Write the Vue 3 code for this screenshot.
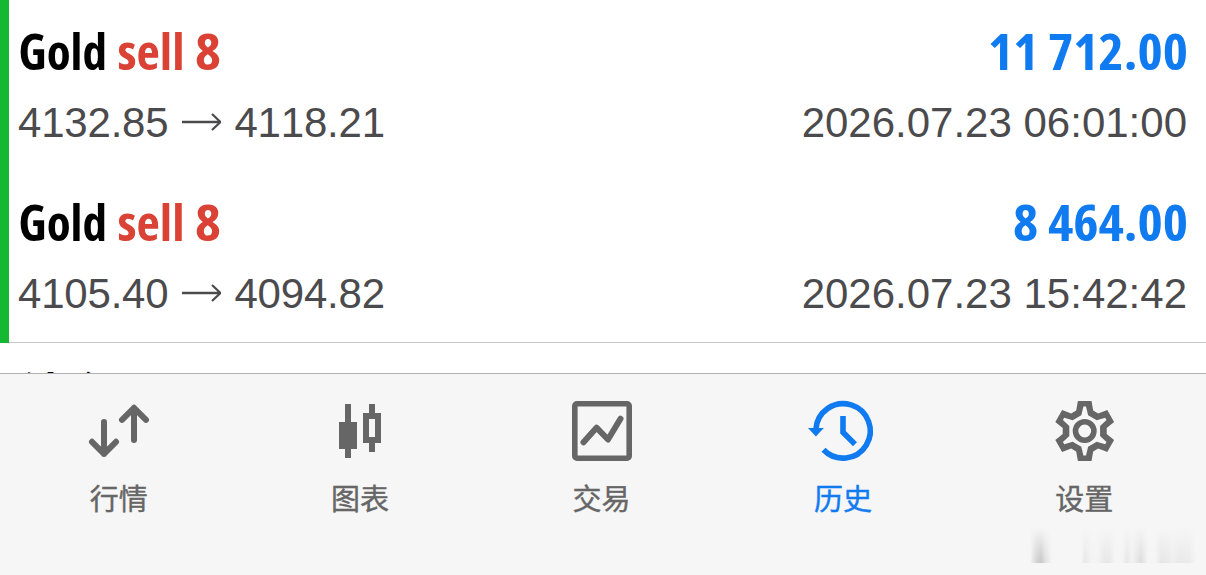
<script setup>
import {ref} from 'vue'

const deals = ref([
    {symbol: "Gold", side: "sell", volume: 8, open: "4132.85", close: "4118.21", profit: "11 712.00", profitWidth: 200, time: "2026.07.23 06:01:00"},
    {symbol: "Gold", side: "sell", volume: 8, open: "4105.40", close: "4094.82", profit: "8 464.00", profitWidth: 175, time: "2026.07.23 15:42:42"},
])

const tabs = [
    {id: "quotes", label: "行情"},
    {id: "charts", label: "图表"},
    {id: "trade", label: "交易"},
    {id: "history", label: "历史"},
    {id: "settings", label: "设置"},
]
const active = ref("history")

// repeat one tooth six times round the centre of the icon
const ring = tooth => {
    const pts = [0, 1, 2, 3, 4, 5].flatMap(i => {
        const a = i * Math.PI / 3
        return tooth.map(([x, y]) => [
            (33.7 + x * Math.cos(a) - y * Math.sin(a)).toFixed(2),
            (33 + x * Math.sin(a) + y * Math.cos(a)).toFixed(2)
        ].join(" "))
    })
    return `M${pts.join("L")}Z`
}
const gear = ring([[-8.5, -20.5], [-6.8, -30], [6.8, -30], [8.5, -20.5]])
    + ring([[-3.4, -15.8], [-1.3, -24.4], [1.3, -24.4], [3.4, -15.8]])
</script>

<template>
    <div class="screen">
        <main>
            <section class="group">
                <article v-for="deal in deals" :key="deal.time" class="deal">
                    <div class="line title">
                        <svg width="210" height="60">
                            <text x="-.5" y="48" textLength="88.5" lengthAdjust="spacingAndGlyphs">{{ deal.symbol }}</text>
                            <text class="sell" x="98.5" y="48" textLength="67" lengthAdjust="spacingAndGlyphs">{{ deal.side }}</text>
                            <text class="sell" x="176" y="48" textLength="26" lengthAdjust="spacingAndGlyphs">{{ deal.volume }}</text>
                        </svg>
                        <svg width="250" height="60">
                            <text class="profit" :x="251 - deal.profitWidth" y="48" :textLength="deal.profitWidth" lengthAdjust="spacingAndGlyphs">{{ deal.profit }}</text>
                        </svg>
                    </div>
                    <div class="line detail">
                        <span class="prices">
                            {{ deal.open }}
                            <svg width="40" height="20" viewBox="0 0 40 20">
                                <path d="M1 9H39M31 1L39.5 9L31 17" />
                            </svg>
                            {{ deal.close }}
                        </span>
                        <span>{{ deal.time }}</span>
                    </div>
                </article>
            </section>
            <div class="balance">结余</div>
        </main>

        <nav>
            <a v-for="tab in tabs" :key="tab.id" :class="{active: tab.id === active}" @click="active = tab.id">
                <svg class="icon" width="66" height="66" viewBox="0 0 66 66">
                    <g v-if="tab.id === 'quotes'" class="stroke round">
                        <path d="M18 24V56M6 43.8L18 55.8L30 43.8" />
                        <path d="M48 42V10M36 21.8L48 9.8L60 21.8" />
                    </g>
                    <g v-else-if="tab.id === 'charts'" class="fill">
                        <path d="M18 6H24V24H30V51H24V60H18V51H12V24H18Z" />
                        <path d="M42 6H48V15H54V45H48V54H42V45H36V15H42ZM42 21V39H48V21Z" />
                    </g>
                    <g v-else-if="tab.id === 'trade'">
                        <path class="fill" d="M9 3H59A5 5 0 0 1 64 8V58A5 5 0 0 1 59 63H9A5 5 0 0 1 4 58V8A5 5 0 0 1 9 3ZM9.6 8.6V57.4H58.4V8.6Z" />
                        <path class="stroke round" d="M15.5 44.3L28.5 29.7L40 41.5L52.5 20.7" />
                    </g>
                    <g v-else-if="tab.id === 'history'">
                        <path class="stroke" d="M5.9 31.5A27.2 27.2 0 1 1 13.5 51.8" />
                        <path class="fill" d="M-2 30H13.8L5.9 38.5Z" />
                        <path class="stroke" d="M33 18V34.3L45 46.3" />
                    </g>
                    <g v-else>
                        <path class="fill" :d="gear" />
                        <circle class="stroke" cx="33.7" cy="33" r="9.2" />
                    </g>
                </svg>
                <span>{{ tab.label }}</span>
            </a>
        </nav>
        <div class="smudge"></div>
    </div>
</template>

<style>
    body {
        margin: 0;
        background: #f6f6f6;
    }
</style>

<style scoped>
    .screen {
        position: relative;
        height: 575px;
        overflow: hidden;
        background: #f6f6f6;
        font-family: "Liberation Sans", "Noto Sans CJK SC", sans-serif;
    }

    main {
        height: 373px;
        overflow: hidden;
        background: #fff;
        border-bottom: 1px solid #b1b1b3;
    }

    .group {
        box-sizing: border-box;
        height: 343px;
        border-left: 9px solid #14b831;
        position: relative;
    }
    .group::after {
        content: "";
        position: absolute;
        left: 0;
        right: 0;
        bottom: 0;
        height: 1px;
        background: #c8c8ca;
    }

    .deal {
        height: 149px;
        padding: 22px 19px 0 10px;
    }

    .line {
        display: flex;
        justify-content: space-between;
    }

    .title {
        height: 60px;
        font: 700 50px "Open Sans", sans-serif;
        font-stretch: 75%;
    }
    .title svg {
        overflow: visible;
    }
    .sell {
        fill: #d94234;
    }
    .profit {
        fill: #107bf0;
    }

    .detail {
        margin-top: 17px;
        font-size: 42px;
        line-height: 48px;
        color: #4b4b4d;
        font-kerning: none;
        white-space: nowrap;
    }
    .prices {
        display: flex;
        align-items: center;
        gap: 13px;
        margin-left: -1px;
        letter-spacing: -.2px;
    }
    .prices path {
        fill: none;
        stroke: currentColor;
        stroke-width: 2.3;
    }

    .balance {
        padding: 18px 0 0 19px;
        font: 700 46px/60px "Noto Sans CJK SC", sans-serif;
    }

    nav {
        display: grid;
        grid-template-columns: repeat(5, 1fr);
        margin: 0 1px 0 -2px;
    }

    nav a {
        display: flex;
        flex-direction: column;
        align-items: center;
        padding-top: 24px;
        font: 400 29px/42px "Noto Sans CJK SC", sans-serif;
        color: #666;
    }
    nav a.active {
        color: #107bf0;
    }
    nav span {
        margin-top: 12px;
        -webkit-text-stroke: .4px currentColor;
    }

    .icon {
        overflow: visible;
    }
    .fill {
        fill: currentColor;
        fill-rule: evenodd;
    }
    .stroke {
        fill: none;
        stroke: currentColor;
        stroke-width: 5.6;
    }
    .round {
        stroke-width: 6;
        stroke-linecap: round;
        stroke-linejoin: round;
    }

    /* faded streaks in the corner */
    .smudge {
        position: absolute;
        left: 1030px;
        top: 527px;
        width: 166px;
        height: 36px;
        background:
            linear-gradient(#f6f6f6, rgba(246, 246, 246, 0)),
            linear-gradient(90deg, #f6f6f6 0, #d4d4d4 6px, #c6c6c6 11px, #dedede 15px, #f6f6f6 22px,
                #f6f6f6 51px, #e8e8e8 55px, #f3f3f3 61px, #f4f4f4 67px, #e8e8e8 74px, #e8e8e8 80px, #f5f5f5 85px,
                #f5f5f5 92px, #e6e6e6 97px, #f3f3f3 102px, #dcdcdc 111px, #f5f5f5 118px,
                #f5f5f5 125px, #e6e6e6 131px, #e8e8e8 137px, #eee 142px, #e9e9e9 150px, #ebebeb 160px, #f6f6f6 166px);
    }
</style>
